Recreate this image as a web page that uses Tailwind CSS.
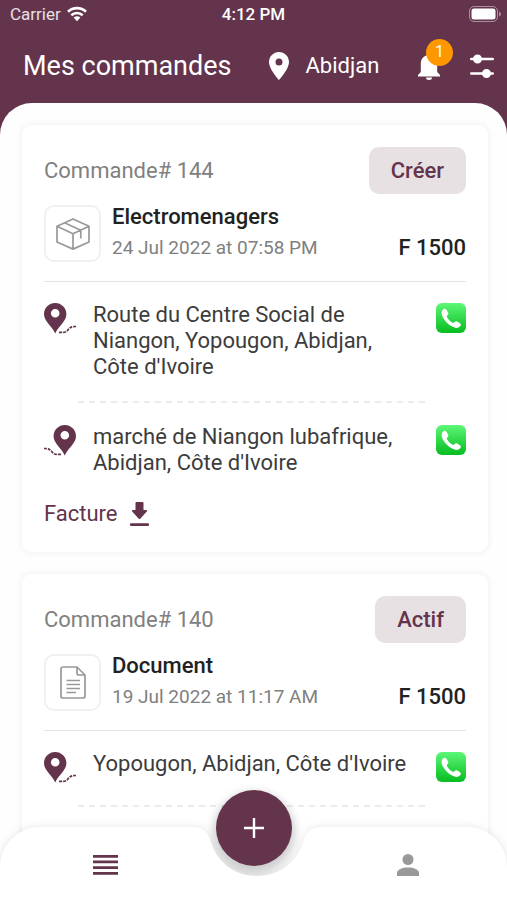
<!DOCTYPE html>
<html lang="fr">
<head>
<meta charset="utf-8">
<meta name="viewport" content="width=device-width, initial-scale=1">
<title>Mes commandes</title>
<script src="https://cdn.jsdelivr.net/npm/@tailwindcss/browser@4"></script>
</head>
<body class="bg-[#63344b] font-['Roboto','Liberation_Sans',sans-serif] text-[#3c3c3c]">
<svg class="absolute size-0" aria-hidden="true">
  <defs>
    <linearGradient id="green" x1="0" y1="0" x2="0" y2="1"><stop offset="0" stop-color="#5df777"/><stop offset="1" stop-color="#07bc20"/></linearGradient>
    <symbol id="pin" viewBox="0 0 32 32">
      <path fill="#63344b" fill-rule="evenodd" d="M11.2 0C5 0 0 4.900 0 11.100C0 18.500 7.500 22.500 11.200 30.500C15 22.500 22.400 18.500 22.400 11.100C22.400 4.900 17.400 0 11.200 0ZM11.200 6a4.300 4.300 0 1 1 0 8.600a4.300 4.300 0 1 1 0-8.600Z"/>
      <path fill="none" stroke="#63344b" stroke-width="1.700" stroke-dasharray="3 1" d="M15 29.300C19 29.700 22 29.500 23.500 27.500C25.500 24.500 27.500 23.500 32 23.500"/>
    </symbol>
    <symbol id="phone" viewBox="0 0 30 30">
      <rect width="30" height="30" rx="6" fill="url(#green)"/>
      <path fill="#fff" d="M7.200 6.300C8.300 5.300 9.600 5.600 10.400 6.700L12.100 9.500C12.700 10.700 12.300 11.500 11.200 12.500C10.700 13.100 10.700 13.600 11.100 14.300C12.500 16.800 14.300 18.600 16.700 19.700C17.300 20 17.800 19.900 18.200 19.400C19.200 18.200 20.200 17.900 21.300 18.500L24 20.200C25.200 21 25.100 22.200 24.100 23.300C22.200 25.200 19.700 25.400 16.600 23.800C12.100 21.600 8.600 18.200 6.500 13.800C5.100 10.800 5.300 8.200 7.200 6.300Z"/>
    </symbol>
  </defs>
</svg>

<div class="flex h-screen flex-col overflow-hidden">
  <div class="grid shrink-0 grid-cols-3 items-center px-[10px] pt-[4px] text-[17px] leading-5 text-white/85">
    <div class="flex items-center gap-[6px]">
      <span>Carrier</span>
      <svg class="h-4 w-5" viewBox="0 0 20 16" fill="none" stroke="#fff" stroke-width="2.600" aria-label="Wi-Fi"><path d="M1 5.800C6 .9 14 .9 19 5.800M4.300 9.300C7.500 6.300 12.500 6.300 15.700 9.300"/><path fill="#fff" stroke="none" d="M6.600 11.600C8.600 9.800 11.400 9.800 13.400 11.600L10 15.200Z"/></svg>
    </div>
    <span class="justify-self-center font-medium text-white">4:12 PM</span>
    <svg class="-mr-1 h-4 w-8 justify-self-end" viewBox="0 0 32 16" aria-label="Batterie"><rect x=".5" y=".5" width="28" height="15" rx="4.500" fill="none" stroke="#fff" stroke-opacity=".45"/><rect x="2.500" y="2.500" width="24" height="11" rx="2.500" fill="#fff"/><path d="M30 5.500v5q2-1 2-2.500t-2-2.500" fill="#fff" fill-opacity=".45"/></svg>
  </div>

  <header class="flex h-[79px] shrink-0 items-center pl-[23px] pr-[13px] pt-1 text-white">
    <h1 class="text-[27px] leading-8">Mes commandes</h1>
    <button type="button" class="ml-[37px] flex items-center gap-[17px] text-[22px] leading-7">
      <svg class="h-7 w-5" viewBox="0 0 20 28" fill="#fff" aria-hidden="true"><path fill-rule="evenodd" d="M10 0C4.500 0 0 4.400 0 10C0 17.300 10 28 10 28S20 17.300 20 10C20 4.400 15.500 0 10 0ZM10 6.500a3.500 3.500 0 1 1 0 7a3.500 3.500 0 1 1 0-7Z"/></svg>
      Abidjan
    </button>
    <div class="ml-auto flex items-center gap-[29px]">
      <button type="button" class="relative" aria-label="Notifications">
        <svg class="h-7 w-6" viewBox="0 0 24 28" fill="#fff" aria-hidden="true"><path d="M12 0C10.800 0 10 .9 10 2V3.200C6 4.100 3.800 7.600 3.800 12V20L1 23V24.500H23V23L20.200 20V12C20.200 7.600 18 4.100 14 3.200V2C14 .9 13.200 0 12 0ZM9 25.500A3 2.500 0 0 0 15 25.500Z"/></svg>
        <span class="absolute -right-3 -top-[13px] flex size-[27px] items-center justify-center rounded-full bg-[#ff9800] text-base">1</span>
      </button>
      <button type="button" aria-label="Filtres">
        <svg class="h-6 w-6" viewBox="0 0 24 24" stroke="#fff" stroke-width="2.600" stroke-linecap="round" fill="#fff" aria-hidden="true"><path d="M1.300 5H22.700M1.300 19.500H22.700"/><circle cx="7.500" cy="5" r="3.200"/><circle cx="16.500" cy="19.500" r="3.200"/></svg>
      </button>
    </div>
  </header>

  <main class="flex min-h-0 grow flex-col gap-[22px] overflow-hidden rounded-t-[32px] bg-[#fefefe] pl-[22px] pr-[19px] pt-[22px]">
    <article class="shrink-0 rounded-[10px] bg-white px-[22px] pb-[25px] pt-[22px] shadow-[0_0_6px_2px_rgba(0,0,0,0.045)]">
      <div class="flex h-[47px] items-center justify-between">
        <span class="text-[22px] leading-7 text-[#808080]">Commande# 144</span>
        <button type="button" class="h-full rounded-[10px] bg-[#e7e1e4] px-[22px] text-[22px] font-medium text-[#63344b]">Créer</button>
      </div>
      <div class="mt-[11px] flex items-end gap-[11px]">
        <div class="flex size-[57px] shrink-0 items-center justify-center rounded-[10px] border-2 border-[#f0f0f0]">
          <svg class="h-8 w-[34px]" viewBox="0 0 34 32" fill="none" stroke="#999" stroke-width="1.700" stroke-linejoin="round" aria-hidden="true"><path d="M17 .9L33 8.300V24L17 31.100L1 24V8.300ZM1 8.300L17 15.800L33 8.300M17 15.800V31M8.500 4.800L24.800 12.200V20.500"/></svg>
        </div>
        <div class="flex grow flex-col">
          <h2 class="text-[22px] font-medium leading-6 text-[#222]">Electromenagers</h2>
          <div class="mt-[5px] flex items-center justify-between">
            <time class="text-[19px] leading-7 text-[#808080]">24 Jul 2022 at 07:58 PM</time>
            <span class="text-[22px] font-medium leading-7 text-[#222]">F 1500</span>
          </div>
        </div>
      </div>
      <hr class="mt-[19px] border-[#e4e4e4]">
      <div class="mt-5 flex min-h-8 items-start">
        <svg class="mt-px size-8 shrink-0" aria-hidden="true"><use href="#pin"/></svg>
        <p class="ml-[17px] mr-4 grow text-[22px] leading-[26px]">Route du Centre Social de Niangon, Yopougon, Abidjan, Côte d'Ivoire</p>
        <button type="button" class="mt-px shrink-0" aria-label="Appeler"><svg class="size-[30px]" aria-hidden="true"><use href="#phone"/></svg></button>
      </div>
      <div class="ml-[34px] mr-[37px] mt-[21px] h-[2px] bg-[repeating-linear-gradient(90deg,#ebebeb_0_6px,transparent_6px_11px)]"></div>
      <div class="mt-[21px] flex min-h-8 items-start">
        <svg class="mt-px size-8 shrink-0 -scale-x-100" aria-hidden="true"><use href="#pin"/></svg>
        <p class="ml-[17px] mr-4 grow text-[22px] leading-[26px]">marché de Niangon lubafrique, Abidjan, Côte d'Ivoire</p>
        <button type="button" class="mt-px shrink-0" aria-label="Appeler"><svg class="size-[30px]" aria-hidden="true"><use href="#phone"/></svg></button>
      </div>
      <a href="#" class="mt-[25px] flex w-fit items-center gap-3 text-[22px] leading-[26px] text-[#63344b]">
        Facture
        <svg class="h-6 w-[19px]" viewBox="0 0 19 24" fill="#63344b" aria-hidden="true"><path d="M5.500 1Q5.500 0 6.500 0H12.500Q13.500 0 13.500 1V8H16.500Q17.500 8.500 16.800 9.500L10.500 16.500Q9.500 17.500 8.500 16.500L2.200 9.500Q1.500 8.500 2.500 8H5.500Z"/><rect y="21.300" width="19" height="2.700" rx="1"/></svg>
      </a>
    </article>

    <article class="shrink-0 rounded-[10px] bg-white px-[22px] pb-[120px] pt-[22px] shadow-[0_0_6px_2px_rgba(0,0,0,0.045)]">
      <div class="flex h-[47px] items-center justify-between">
        <span class="text-[22px] leading-7 text-[#808080]">Commande# 140</span>
        <button type="button" class="h-full rounded-[10px] bg-[#e7e1e4] px-[22px] text-[22px] font-medium text-[#63344b]">Actif</button>
      </div>
      <div class="mt-[11px] flex items-end gap-[11px]">
        <div class="flex size-[57px] shrink-0 items-center justify-center rounded-[10px] border-2 border-[#f0f0f0]">
          <svg class="h-[33px] w-[26px]" viewBox="0 0 26 33" fill="none" stroke="#999" stroke-width="1.700" stroke-linejoin="round" aria-hidden="true"><path d="M3 1H17L25 9V30Q25 32 23 32H3Q1 32 1 30V3Q1 1 3 1ZM17 1V7Q17 9 19 9H25M6.500 14.500H20M6.500 18.500H20M6.500 22.500H20M6.500 26.500H16"/></svg>
        </div>
        <div class="flex grow flex-col">
          <h2 class="text-[22px] font-medium leading-6 text-[#222]">Document</h2>
          <div class="mt-[5px] flex items-center justify-between">
            <time class="text-[19px] leading-7 text-[#808080]">19 Jul 2022 at 11:17 AM</time>
            <span class="text-[22px] font-medium leading-7 text-[#222]">F 1500</span>
          </div>
        </div>
      </div>
      <hr class="mt-[19px] border-[#e4e4e4]">
      <div class="mt-5 flex min-h-8 items-start">
        <svg class="mt-px size-8 shrink-0" aria-hidden="true"><use href="#pin"/></svg>
        <p class="ml-[17px] mr-4 grow text-[22px] leading-[26px]">Yopougon, Abidjan, Côte d'Ivoire</p>
        <button type="button" class="mt-px shrink-0" aria-label="Appeler"><svg class="size-[30px]" aria-hidden="true"><use href="#phone"/></svg></button>
      </div>
      <div class="ml-[34px] mr-[37px] mt-[21px] h-[2px] bg-[repeating-linear-gradient(90deg,#ebebeb_0_6px,transparent_6px_11px)]"></div>
    </article>
  </main>
</div>

<nav class="fixed inset-x-0 bottom-0" aria-label="Navigation principale">
  <button type="button" class="absolute -top-[37px] left-1/2 flex size-[76px] -translate-x-1/2 items-center justify-center rounded-full bg-[#63344b] shadow-[0_5px_10px_3px_rgba(0,0,0,0.2)]" aria-label="Nouvelle commande">
    <svg class="size-5" viewBox="0 0 20 20" stroke="#fff" stroke-width="2.400" aria-hidden="true"><path d="M0 10H20M10 0V20"/></svg>
  </button>
  <div class="pointer-events-none relative flex h-[73px] drop-shadow-[0_0_4px_rgba(0,0,0,0.1)]">
    <div class="flex grow basis-0 items-center justify-center rounded-tl-[40px] bg-white pl-[20px] pt-[3px]">
      <button type="button" class="pointer-events-auto" aria-label="Commandes"><svg class="h-5 w-[25px]" viewBox="0 0 25 20" fill="#63344b" aria-hidden="true"><path d="M0 0H25V2.700H0ZM0 5.600H25V8.300H0ZM0 11.300H25V14H0ZM0 17H25V19.700H0Z"/></svg></button>
    </div>
    <svg class="-mx-px h-[73px] w-[134px] shrink-0" viewBox="0 0 134 73" fill="#fff" aria-hidden="true"><path d="M0 0H2C13 0 18 5 20 12C25 33 43 49 67 49C91 49 109 33 114 12C116 5 121 0 132 0H134V73H0Z"/></svg>
    <div class="flex grow basis-0 items-center justify-center rounded-tr-[40px] bg-white pr-[14px] pt-[3px]">
      <button type="button" class="pointer-events-auto" aria-label="Profil"><svg class="h-[22px] w-[22px]" viewBox="0 0 22 22" fill="#999" aria-hidden="true"><circle cx="11" cy="5.500" r="5.500"/><path d="M0 22V19C0 15.500 5.500 13.500 11 13.500S22 15.500 22 19V22Z"/></svg></button>
    </div>
  </div>
</nav>
</body>
</html>
